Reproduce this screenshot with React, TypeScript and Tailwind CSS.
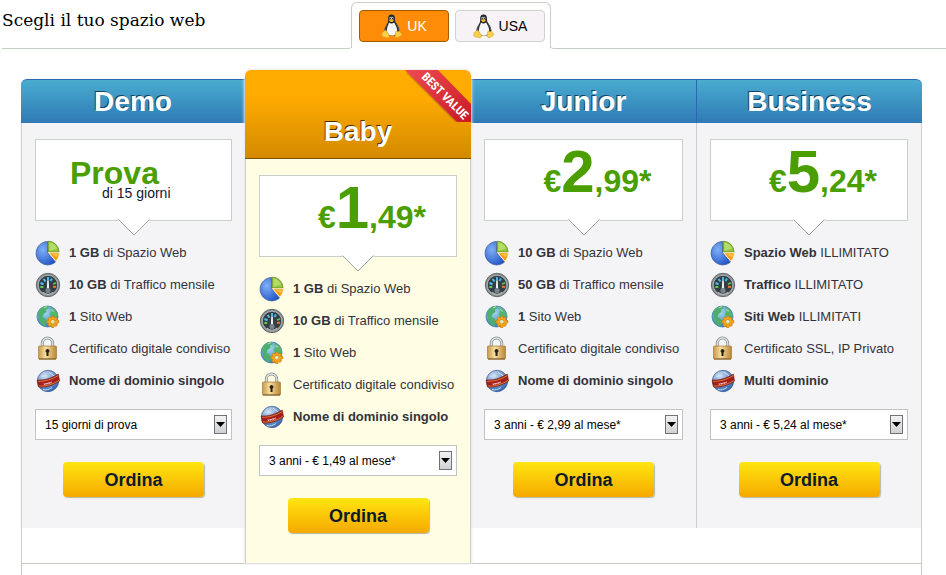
import type { ReactNode } from "react";

interface Plan {
  name: string;
  price?: [string, string];
  trial?: string;
  features: ReactNode[];
  option: string;
  featured?: boolean;
}

const plans: Plan[] = [
  {
    name: "Demo",
    trial: "di 15 giorni",
    features: [
      <><b>1 GB</b> di Spazio Web</>,
      <><b>10 GB</b> di Traffico mensile</>,
      <><b>1</b> Sito Web</>,
      <>Certificato digitale condiviso</>,
      <b>Nome di dominio singolo</b>,
    ],
    option: "15 giorni di prova",
  },
  {
    name: "Baby",
    price: ["1", ",49*"],
    features: [
      <><b>1 GB</b> di Spazio Web</>,
      <><b>10 GB</b> di Traffico mensile</>,
      <><b>1</b> Sito Web</>,
      <>Certificato digitale condiviso</>,
      <b>Nome di dominio singolo</b>,
    ],
    option: "3 anni - € 1,49 al mese*",
    featured: true,
  },
  {
    name: "Junior",
    price: ["2", ",99*"],
    features: [
      <><b>10 GB</b> di Spazio Web</>,
      <><b>50 GB</b> di Traffico mensile</>,
      <><b>1</b> Sito Web</>,
      <>Certificato digitale condiviso</>,
      <b>Nome di dominio singolo</b>,
    ],
    option: "3 anni - € 2,99 al mese*",
  },
  {
    name: "Business",
    price: ["5", ",24*"],
    features: [
      <><b>Spazio Web</b> ILLIMITATO</>,
      <><b>Traffico</b> ILLIMITATO</>,
      <><b>Siti Web</b> ILLIMITATI</>,
      <>Certificato SSL, IP Privato</>,
      <b>Multi dominio</b>,
    ],
    option: "3 anni - € 5,24 al mese*",
  },
];

const Tux = () => (
  <svg viewBox="0 0 22 26" className="h-[26px] w-[22px]" aria-hidden="true">
    <path d="M10.500 1.500C8 1.500 7 3.300 7.200 6c.1 2.300-.2 3.500-1.600 5.700C4 14.300 3 16.300 3.600 19l3 3.500h8l3.800-3c.3-3.500-.9-6.300-2.700-8.800-1.500-2-1.700-2.600-1.700-5C14 3 13 1.500 10.500 1.500z" fill="#23262c" />
    <path d="M8 9.500c1.500 1.400 3.500 1.400 5.200-.1 1.200 2.600 3.200 5 3 8.300-.1 2.500-2.200 4.800-5.200 4.800s-5-1.900-5.200-4.500C5.600 14.800 7.400 12.300 8 9.500z" fill="#f6f6f8" />
    <path d="M8.500 4.300c.7-1 1.400-.5 1.700.3.4-.9 1.500-1.200 2.200.1l.1 1.800H8.400z" fill="#c9ccd2" />
    <circle cx="9.400" cy="5.300" r=".6" fill="#111" />
    <circle cx="11.500" cy="5.300" r=".6" fill="#111" />
    <path d="M8 7c1-1 3.600-1 4.800 0-.3 1.400-1.200 2.100-2.300 2.100S8.300 8.300 8 7z" fill="#f3b21c" />
    <path d="M3.700 17.400c1.200-.4 2.100.5 2.700 1.800.9 1.500 2.500 3.200 1.800 4.700-.7 1.300-2.300.9-3.600.5-1.400-.5-3.600-.5-3.900-1.600-.3-1 .3-1.800.3-2.700 0-1.400 1.800-.8 2.700-2.700z" fill="#f9cf4a" stroke="#d09a20" strokeWidth=".5" />
    <path d="M15.200 18c1.100 1 2.200.6 3.200-.3.700 1 .8 2 1.800 2.700 1.200.9.900 1.600-.2 2.200-1.300.7-2.500 2.200-4 2.200-1.700 0-2.100-1.600-1.800-3.200.2-1.300.2-2.600 1-3.600z" fill="#f9cf4a" stroke="#d09a20" strokeWidth=".5" />
    <path d="M6.300 12C4.800 14 4 15.300 4.400 17M15.400 11.500c1.600 2 2.400 3.700 2.300 5.600" stroke="#6d737e" strokeWidth=".7" fill="none" />
  </svg>
);

const PieIcon = () => (
  <svg viewBox="0 0 26 26" className="size-[26px]" aria-hidden="true">
    <defs>
      <radialGradient id="pieBlue" cx=".35" cy=".35" r=".8">
        <stop offset="0" stopColor="#7fb0f6" />
        <stop offset="1" stopColor="#1d4fc4" />
      </radialGradient>
    </defs>
    <path d="M12.500 12.500V1.500A11.700 11.700 0 1 0 20.500 22z" fill="url(#pieBlue)" stroke="#3b5c9c" strokeWidth=".8" />
    <path d="M13.300 12V1.200A10.800 10.800 0 0 1 24 12z" fill="#93c63a" stroke="#5f8c25" strokeWidth=".8" />
    <path d="M14.500 11l-.2-8.500c3.700.3 6.500 2.800 7.700 6z" fill="#b6dc68" />
    <path d="M13.800 12.800H24.300c0 3.700-1.300 6.200-3.500 8.300z" fill="#f79a10" stroke="#fff3d0" strokeWidth=".8" />
    <path d="M16.500 14h6.500c-.3 1.700-.8 2.800-1.500 3.600z" fill="#fcc243" />
  </svg>
);

const GaugeIcon = () => (
  <svg viewBox="0 0 26 26" className="size-[26px]" aria-hidden="true">
    <circle cx="13" cy="13" r="11.700" fill="#8c9496" stroke="#4c5355" strokeWidth=".8" />
    <circle cx="13" cy="13" r="9.700" fill="#353e44" stroke="#c3c9c9" strokeWidth=".7" />
    <path d="M5.500 11l3 1.200M8.500 7l2 2.500" stroke="#4ec3ee" strokeWidth="2" />
    <path d="M13 5v3.500M17 6.500L15.500 9" stroke="#47b6e4" strokeWidth="2" />
    <path d="M5.300 15h3M18 12l3-1" stroke="#62c555" strokeWidth="1.800" />
    <path d="M18 14.800h3" stroke="#f0742c" strokeWidth="2" />
    <path d="M12.200 8.500h1.600l.4 10h-2.400z" fill="#eef1f1" />
    <circle cx="13" cy="18.500" r="2.600" fill="#77838a" />
    <path d="M8 20.300c3 2.400 7 2.400 10 0" stroke="#aeb5b7" strokeWidth="1.200" fill="none" />
  </svg>
);

const GlobeIcon = () => (
  <svg viewBox="0 0 26 26" className="size-[26px]" aria-hidden="true">
    <defs>
      <radialGradient id="globeSea" cx=".4" cy=".3" r=".8">
        <stop offset="0" stopColor="#a4d8ee" />
        <stop offset="1" stopColor="#2375b4" />
      </radialGradient>
    </defs>
    <circle cx="12.500" cy="12.500" r="10.500" fill="url(#globeSea)" stroke="#2d709c" strokeWidth=".7" />
    <path d="M3 9c1.500-4 5-6.800 9-7L14 4l-3 1.500.5 2.500-3 2-1 3 3 1.500 1.500 3-2 5c-3-1.500-5-4-6-7z" fill="#4fae6b" />
    <path d="M15 3l5 2.800 2.800 4.700-1 3.500-3-1.500-2.500 1-1.800-3.500 1.800-2.500z" fill="#55b56a" />
    <path d="M9 4l3-1.500M16 5.500l3 1.800" stroke="#a7dda6" strokeWidth="1.100" />
    <path d="M17.500 12l1.500.2.400 1.800 1.600-.9 1.400 1.400-.8 1.600 2.200.5v2.200l-2.200.5.900 1.700-1.500 1.400-1.600-.8-.6 1.900h-2.200l-.5-1.900-1.700.9-1.500-1.500.9-1.600-1.900-.6v-2.200l1.900-.5-.9-1.600 1.500-1.400 1.700.8z" fill="#f5a51c" stroke="#c8780a" strokeWidth=".7" />
    <circle cx="17.800" cy="17.700" r="2.300" fill="#dcebc4" stroke="#d98d10" strokeWidth=".9" />
  </svg>
);

const LockIcon = () => (
  <svg viewBox="0 0 26 26" className="size-[26px]" aria-hidden="true">
    <defs>
      <linearGradient id="lockBody" x1="0" x2="1" y1="0" y2="0">
        <stop offset="0" stopColor="#c9994c" />
        <stop offset=".4" stopColor="#f6df9f" />
        <stop offset="1" stopColor="#b98538" />
      </linearGradient>
    </defs>
    <path d="M7.300 11V7.200a5 5 0 0 1 10.400 0V11" fill="none" stroke="#8e9494" strokeWidth="3" />
    <path d="M7.300 11V7.200a5 5 0 0 1 10.400 0V11" fill="none" stroke="#dde1e1" strokeWidth="1.300" />
    <rect x="3.500" y="10" width="18" height="13" rx="1" fill="url(#lockBody)" stroke="#a67c38" strokeWidth=".7" />
    <path d="M4 23h17" stroke="#7b551c" />
    <path d="M12.500 13a2 2 0 0 1 1 3.700V20h-2v-3.300a2 2 0 0 1 1-3.700z" fill="#2b2014" />
  </svg>
);

const DomainIcon = () => (
  <svg viewBox="0 0 26 26" className="size-[26px]" aria-hidden="true">
    <defs>
      <radialGradient id="domainBall" cx=".35" cy=".25" r=".9">
        <stop offset="0" stopColor="#cfdff2" />
        <stop offset=".5" stopColor="#7298cc" />
        <stop offset="1" stopColor="#1d55a6" />
      </radialGradient>
    </defs>
    <circle cx="13" cy="13" r="10.700" fill="url(#domainBall)" stroke="#35568e" strokeWidth=".7" />
    <path d="M6 8c2 1 4-1 6 0M14 4c1 2 4 2 5 4M8 21.500c3 1 6 0 9-2" stroke="#d5e5f6" strokeWidth=".9" fill="none" />
    <path d="M2.300 12C9 12.500 17 10.300 23.300 6l1.300 7C18 17.500 11 19.700 3.500 19z" fill="#a81c1a" stroke="#701613" strokeWidth=".6" />
    <path d="M3 13.300C10 13.500 17 11.500 23.300 7.500M3.800 18C11 18.500 18 16.300 24.300 12.200" stroke="#ecc04f" strokeWidth=".6" fill="none" />
    <path d="M8.500 15.600l1 1.200.6-1.500 1 1.200.6-1.500 1 1.100.6-1.500 1 1.100.6-1.600 1 1.100.6-1.600" stroke="#f6dada" strokeWidth=".8" fill="none" />
  </svg>
);

const icons = [PieIcon, GaugeIcon, GlobeIcon, LockIcon, DomainIcon];

const Ribbon = () => (
  <svg viewBox="0 0 66 52" className="absolute right-0 top-0 h-[52px] w-[66px]">
    <defs>
      <linearGradient id="ribbon" x1="0" x2="1" y1="0" y2="1">
        <stop offset="0" stopColor="#ee4a52" />
        <stop offset="1" stopColor="#c81a26" />
      </linearGradient>
    </defs>
    <path d="M1 3l50 50h6L6 1z" fill="#a86c00" opacity=".5" />
    <path d="M0 0h33l33 34v18H52z" fill="url(#ribbon)" />
    <text
      x="40"
      y="26"
      transform="rotate(45 40 26)"
      textAnchor="middle"
      dominantBaseline="central"
      className="fill-white font-['Liberation_Sans_Narrow','Roboto_Condensed','Open_Sans_Condensed','DejaVu_Sans_Condensed',sans-serif] text-[12px] font-bold"
    >
      BEST VALUE
    </text>
  </svg>
);

const PriceBox = ({ plan }: { plan: Plan }) => (
  <div className="relative h-[82px] border border-[#c9d0c9] bg-white">
    {plan.price ? (
      <p className="pl-7 pt-[2px] text-center text-[32px] font-bold leading-[60px] text-[#4a9e00]">
        €<span className="text-[60px]">{plan.price[0]}</span>
        {plan.price[1]}
      </p>
    ) : (
      <div className="pl-[34px] pt-[21px]">
        <p className="text-[32px] font-bold leading-6 text-[#4a9e00]">Prova</p>
        <p className="pl-8 text-sm leading-4 text-[#101830]">{plan.trial}</p>
      </div>
    )}
    <svg viewBox="0 0 32 17" className="absolute left-1/2 top-full -mt-px h-[17px] w-8 -translate-x-1/2" aria-hidden="true">
      <path d="M0 0h32v1L16 16 0 1z" fill="#fff" />
      <path d="M.5.500L16 16 31.500.500" fill="none" stroke="#9ba19b" />
    </svg>
  </div>
);

const PlanColumn = ({ plan, index }: { plan: Plan; index: number }) => {
  const { featured } = plan;
  const first = index === 0;
  const last = index === plans.length - 1;
  return (
    <section
      className={
        featured
          ? "relative z-10 flex flex-col rounded-t-md shadow-[0_0_3px_1px_#ece8ee]"
          : "mt-[9px] flex flex-col"
      }
    >
      {featured ? (
        <header className="relative flex h-[89px] items-end justify-center overflow-hidden rounded-t-md border-b border-[#7a5200] bg-linear-to-b from-[#ffab00] from-30% to-[#d48a00] pb-[6px]">
          <h2 className="text-[28px] font-bold leading-10 text-white [text-shadow:-1px_-1px_0_#4a3200]">{plan.name}</h2>
          <Ribbon />
        </header>
      ) : (
        <header
          className={`h-11 border-t border-[#2f66b4] bg-linear-to-b from-[#4aaccf] to-[#2f7ab5] text-center ${
            first ? "rounded-tl-md" : ""
          } ${last ? "rounded-tr-md border-l" : ""}`}
        >
          <h2 className="text-[28px] font-bold leading-[43px] text-white [text-shadow:-1px_-1px_0_#16405e]">{plan.name}</h2>
        </header>
      )}
      <div
        className={`grow border-[#cccfcc] ${featured ? "border-x bg-[#fffde3]" : "bg-white"} ${
          first ? "border-l" : ""
        } ${last ? "border-r" : ""}`}
      >
        <div
          className={`px-[13px] pt-4 ${
            featured ? "pb-[30px]" : "bg-[#f4f4f6] pb-[31px]"
          } ${last ? "border-l border-[#cccfcc]" : ""}`}
        >
          <PriceBox plan={plan} />
          <ul className="mt-4">
            {plan.features.map((feature, i) => {
              const Icon = icons[i];
              return (
                <li key={i} className="flex h-8 items-center gap-2 whitespace-nowrap text-[13px] text-[#33333b]">
                  <Icon />
                  <span>{feature}</span>
                </li>
              );
            })}
          </ul>
          <div className="relative mt-3">
            <select
              aria-label={`Durata ${plan.name}`}
              className="h-[31px] w-full appearance-none border border-[#c0c4c0] bg-white pl-[9px] text-xs text-black"
            >
              <option>{plan.option}</option>
            </select>
            <span className="pointer-events-none absolute right-[5px] top-[6px] flex h-[19px] w-[13px] items-center justify-center border border-[#707478] bg-linear-to-b from-[#f2f2f2] to-[#cfd1d3]">
              <svg viewBox="0 0 9 5" className="h-[5px] w-[9px] shrink-0" aria-hidden="true">
                <path d="M0 0h9L4.500 5z" fill="#000" />
              </svg>
            </span>
          </div>
          <button className="mx-auto mt-[22px] block h-[35px] w-[141px] rounded bg-linear-to-b from-[#ffe610] to-[#f5a800] text-lg font-bold text-[#0c1a2c] shadow-[1px_1px_1px_#b8b8a8]">
            Ordina
          </button>
        </div>
      </div>
    </section>
  );
};

const App = () => {
  return (
    <div className="flex h-screen min-w-[900px] flex-col overflow-hidden bg-white font-['Liberation_Sans',Arial,sans-serif]">
      <div className="flex pl-[2px] pt-[2px]">
        <div className="w-[350px] rounded-br-[4px] border-b border-[#c4d0c4]">
          <h1 className="pt-1 font-['DejaVu_Serif',serif] text-[17px] leading-7 text-black">Scegli il tuo spazio web</h1>
        </div>
        <div className="-ml-px mb-px flex gap-[6px] rounded-t-md border border-b-0 border-[#c4d0c4] pb-[6px] pl-[7px] pr-[5px] pt-[7px] text-sm">
          <button className="flex h-8 w-[90px] items-center justify-center gap-1 rounded border border-[#a85a00] bg-[#ff8c08] text-white">
            <Tux />
            UK
          </button>
          <button className="flex h-8 w-[90px] items-center justify-center gap-1 rounded border border-[#ccd4cc] bg-[#f6f2f6] text-black">
            <Tux />
            USA
          </button>
        </div>
        <div className="-ml-px grow rounded-bl-[4px] border-b border-[#c4d0c4]" />
      </div>

      <main className="ml-[21px] mr-6 mt-[21px] flex grow flex-col">
        <div className="grid grid-cols-[224fr_226fr_225fr_226fr]">
          {plans.map((plan, i) => (
            <PlanColumn key={plan.name} plan={plan} index={i} />
          ))}
        </div>
        <div className="grow border-x border-t border-[#c4ccc4]" />
      </main>
    </div>
  );
};

export default App;
